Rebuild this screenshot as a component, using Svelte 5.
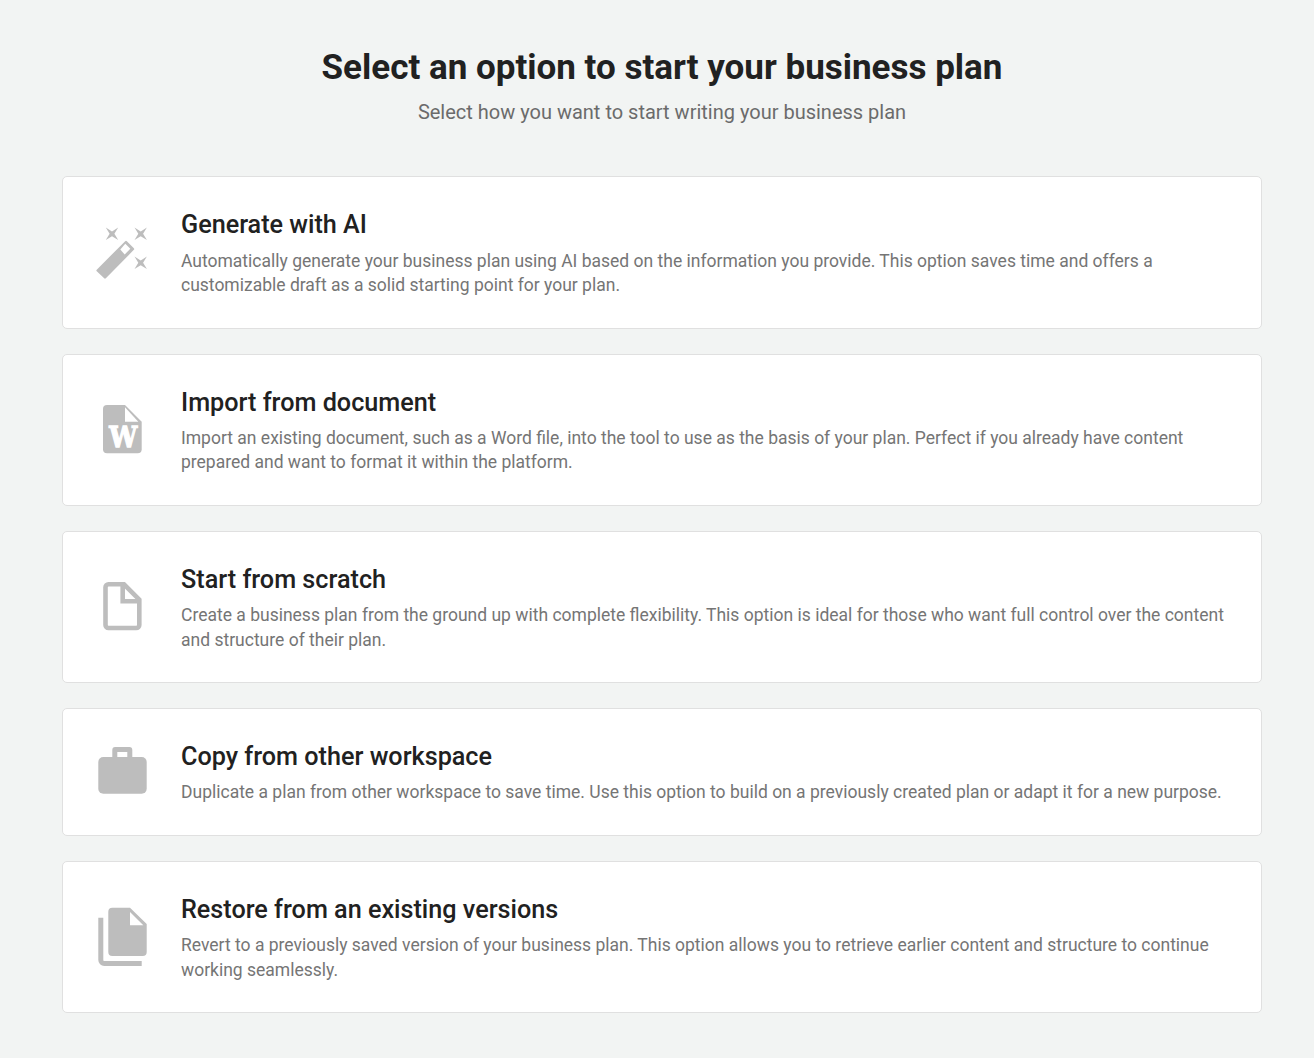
<script>
    const options = [
        {
            id: 'ai',
            title: 'Generate with AI',
            text: 'Automatically generate your business plan using AI based on the information you provide. This option saves time and offers a customizable draft as a solid starting point for your plan.'
        },
        {
            id: 'word',
            title: 'Import from document',
            text: 'Import an existing document, such as a Word file, into the tool to use as the basis of your plan. Perfect if you already have content prepared and want to format it within the platform.'
        },
        {
            id: 'blank',
            title: 'Start from scratch',
            text: 'Create a business plan from the ground up with complete flexibility. This option is ideal for those who want full control over the content and structure of their plan.'
        },
        {
            id: 'case',
            title: 'Copy from other workspace',
            text: 'Duplicate a plan from other workspace to save time. Use this option to build on a previously created plan or adapt it for a new purpose.'
        },
        {
            id: 'copy',
            title: 'Restore from an existing versions',
            text: 'Revert to a previously saved version of your business plan. This option allows you to retrieve earlier content and structure to continue working seamlessly.'
        }
    ];
</script>

<main class="page">
    <header class="head">
        <h1>Select an option to start your business plan</h1>
        <p>Select how you want to start writing your business plan</p>
    </header>

    <div class="list">
        {#each options as option}
            <button class="card" type="button">
                <svg class="icon" width="60" height="60" viewBox="0 0 60 60" aria-hidden="true">
                    {#if option.id === 'ai'}
                        <path d="M33 20 40 27 12 55.5 4.6 48.5Z" fill="#bdbdbd" stroke="#bdbdbd" stroke-width="2.4" stroke-linejoin="round" />
                        <path d="M32.3 21.8 37.3 26.8 31.7 32.5 27.3 27.5Z" fill="#fff" />
                        <path d="M12.8 5.6 19 9.4 25.2 5.6 21.4 11.8 25.2 18 19 14.2 12.8 18 16.6 11.8Z" fill="#bdbdbd" />
                        <path d="M41.5 5.6 47.7 9.4 53.9 5.6 50.1 11.8 53.9 18 47.7 14.2 41.5 18 45.3 11.8Z" fill="#bdbdbd" />
                        <path d="M41.5 34.6 47.7 38.4 53.9 34.6 50.1 40.8 53.9 47 47.7 43.2 41.5 47 45.3 40.8Z" fill="#bdbdbd" />
                    {:else if option.id === 'word'}
                        <path d="M14 5H32L48.7 21.7V49.3a4 4 0 0 1-4 4H14a4 4 0 0 1-4-4V9a4 4 0 0 1 4-4Z" fill="#bdbdbd" />
                        <path d="M32 7.3 45.3 21.7H32Z" fill="#fff" />
                        <text class="word" x="30.3" y="47.3" text-anchor="middle" textLength="28" lengthAdjust="spacingAndGlyphs">W</text>
                    {:else if option.id === 'blank'}
                        <path d="M15.5 7.3H31L46.3 22.6V48a3 3 0 0 1-3 3H15.5a3 3 0 0 1-3-3V10.3a3 3 0 0 1 3-3Z" fill="none" stroke="#bdbdbd" stroke-width="4.6" />
                        <path d="M29.7 6V24.3H46" fill="none" stroke="#bdbdbd" stroke-width="4.6" />
                    {:else if option.id === 'case'}
                        <path d="M22.5 5H36.2A3 3 0 0 1 39.3 8V15H34.3V10H24.3V15H19.3V8A3 3 0 0 1 22.5 5Z" fill="#bdbdbd" />
                        <rect x="5.3" y="15" width="48.4" height="36.7" rx="5" fill="#bdbdbd" />
                    {:else}
                        <path d="M19.3.7H37L53.7 17V45a4 4 0 0 1-4 4H19.3a4 4 0 0 1-4-4V4.7a4 4 0 0 1 4-4Z" fill="#bdbdbd" />
                        <path d="M37 5 50.3 18.3H37Z" fill="#fff" />
                        <path d="M7.8 10.7V53a3.5 3.5 0 0 0 3.5 3.5H48.7" fill="none" stroke="#bdbdbd" stroke-width="5" />
                    {/if}
                </svg>
                <span class="copy">
                    <span class="title">{option.title}</span>
                    <span class="text">{option.text}</span>
                </span>
            </button>
        {/each}
    </div>
</main>

<style>
    :global(body) {
        background-color: #f2f4f3;
        font-family: Roboto, "Liberation Sans", sans-serif;
    }

    .page {
        box-sizing: border-box;
        min-height: 1058px;
        padding: 46px 52px 45px 62px;
    }

    .head {
        text-align: center;
        margin-bottom: 50.3px;
    }

    h1 {
        margin: 0;
        font-size: 35px;
        line-height: 44px;
        font-weight: 700;
        color: #212121;
    }

    .head p {
        margin: 8px 0 0;
        font-size: 20px;
        line-height: 28px;
        color: #6b6b6b;
    }

    .list {
        display: flex;
        flex-direction: column;
        gap: 25px;
    }

    .card {
        display: flex;
        align-items: center;
        gap: 28px;
        box-sizing: border-box;
        width: 1200px;
        padding: 30px;
        background-color: #ffffff;
        border: 1px solid #e0e0e0;
        border-radius: 5px;
        font: inherit;
        text-align: left;
        cursor: pointer;
    }

    .icon {
        flex: 0 0 60px;
    }

    .word {
        fill: #ffffff;
        stroke: #ffffff;
        stroke-width: 1.3;
        font-family: "DejaVu Serif", serif;
        font-weight: 700;
        font-size: 28px;
    }

    .copy {
        display: flex;
        flex-direction: column;
        gap: 6px;
    }

    .title {
        font-size: 25.2px;
        line-height: 1.4;
        font-weight: 500;
        color: #212121;
    }

    .text {
        font-size: 17.5px;
        line-height: 1.4;
        color: #757575;
    }
</style>
